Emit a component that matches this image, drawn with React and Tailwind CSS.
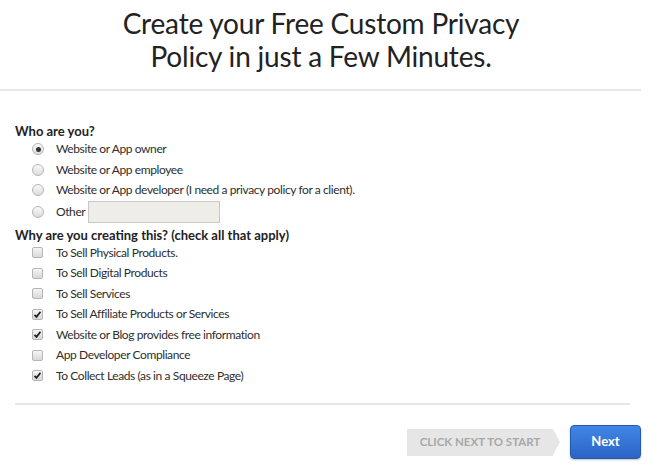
import React from 'react';

const Radio = ({ checked }) => (
    <span className="w-[12px] h-[12px] rounded-full border border-[#b5b5b5] bg-gradient-to-b from-[#fafafa] to-[#dcdcdc] flex items-center justify-center shrink-0">
        {checked && <span className="w-[5px] h-[5px] rounded-full bg-[#333]"></span>}
    </span>
);

const Check = ({ checked }) => (
    <span className="w-[11px] h-[11px] rounded-[2px] border border-[#b5b5b5] bg-gradient-to-b from-[#f5f5f5] to-[#d8d8d8] flex items-center justify-center shrink-0">
        {checked && (
            <svg width="9" height="9" viewBox="0 0 9 9">
                <path d="M1.5 4.8 L3.5 6.8 L7.5 1.8" stroke="#222" strokeWidth="1.8" fill="none" />
            </svg>
        )}
    </span>
);

const App = () => {
    const who = [
        ['Website or App owner', true],
        ['Website or App employee', false],
        ['Website or App developer (I need a privacy policy for a client).', false],
    ];
    const why = [
        ['To Sell Physical Products.', false],
        ['To Sell Digital Products', false],
        ['To Sell Services', false],
        ['To Sell Affiliate Products or Services', true],
        ['Website or Blog provides free information', true],
        ['App Developer Compliance', false],
        ['To Collect Leads (as in a Squeeze Page)', true],
    ];

    return (
        <div className="w-[650px] h-[470px] bg-white text-[#2e2e2e] font-['Lato',sans-serif] overflow-hidden">
            <div className="w-[641px]">
                {/* Heading */}
                <h1 className="pt-[7px] text-center text-[28px] leading-[33px] tracking-[-0.2px] text-[#222] pl-[1px]">
                    Create your Free Custom Privacy
                    <br />
                    Policy in just a Few Minutes.
                </h1>
                <div className="mt-[16px] h-[2px] bg-[#e6e6e6]"></div>

                <div className="px-[15px] pt-[32px] text-[12px] tracking-[-0.4px]">
                    <h2 className="font-bold text-[13px] leading-[16px] tracking-normal text-[#222]">Who are you?</h2>
                    <div className="pl-[17px]">
                        {who.map(([label, checked]) => (
                            <div key={label} className="flex items-center gap-[6px] h-[20.5px]">
                                <Radio checked={checked} />
                                <span className="ml-[6px]">{label}</span>
                            </div>
                        ))}
                        <div className="flex items-center gap-[3px] h-[23px]">
                            <Radio />
                            <span className="ml-[9px]">Other</span>
                            <span className="w-[132px] h-[22px] bg-[#efede8] border border-[#c8c8c8]"></span>
                        </div>
                    </div>

                    <h2 className="font-bold text-[13px] leading-[16px] tracking-normal text-[#222] mt-[3px]">
                        Why are you creating this? (check all that apply)
                    </h2>
                    <div className="pl-[17px]">
                        {why.map(([label, checked]) => (
                            <div key={label} className="flex items-center gap-[6px] h-[20.5px]">
                                <Check checked={checked} />
                                <span className="ml-[7px]">{label}</span>
                            </div>
                        ))}
                    </div>

                    <div className="mt-[17px] h-[2px] bg-[#e6e6e6] mr-[-4px]"></div>

                    <div className="flex justify-end items-center mt-[20px] mr-[-15px] tracking-normal">
                        <div className="flex items-center">
                            <div className="h-[27px] w-[146px] bg-[#e6e6e6] flex items-center justify-center text-[11.5px] font-bold text-[#a8a8a8]">
                                CLICK NEXT TO START
                            </div>
                            <div className="w-0 h-0 border-y-[13.5px] border-y-transparent border-l-[7px] border-l-[#e6e6e6]"></div>
                        </div>
                        <button className="ml-[10px] w-[71px] h-[34px] rounded-[4px] border border-[#2559b5] bg-gradient-to-b from-[#4186e6] to-[#2b64c6] text-white text-[13px] font-bold shadow-[0_1px_2px_rgba(0,0,0,0.25)]">
                            Next
                        </button>
                    </div>
                </div>
            </div>
        </div>
    );
};

export default App;
